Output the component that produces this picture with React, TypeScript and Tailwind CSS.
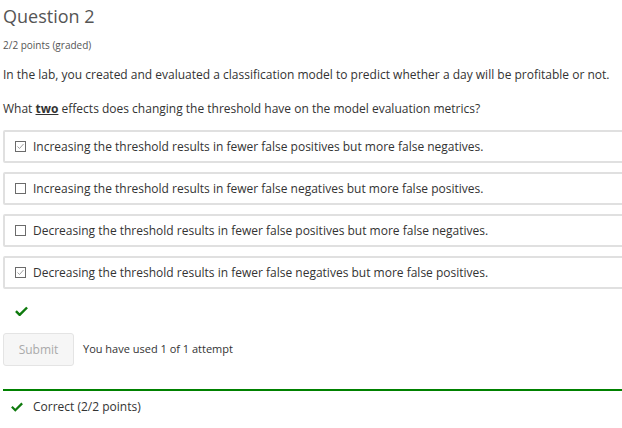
import React from "react";

const options = [
  { text: "Increasing the threshold results in fewer false positives but more false negatives.", checked: true },
  { text: "Increasing the threshold results in fewer false negatives but more false positives.", checked: false },
  { text: "Decreasing the threshold results in fewer false positives but more false negatives.", checked: false },
  { text: "Decreasing the threshold results in fewer false negatives but more false positives.", checked: true },
];

function Box({ checked }: { checked: boolean }) {
  return (
    <svg width="11" height="11" viewBox="0 0 11 11" className="shrink-0">
      <rect x="0.5" y="0.5" width="10" height="10" fill="#fff" stroke="#6b6b6b" />
      {checked && <path d="M2.5 5.5 L4.5 7.5 L8.5 3" fill="none" stroke="#a0a0a0" strokeWidth="1" />}
    </svg>
  );
}

function Check({ size = 13 }: { size?: number }) {
  return (
    <svg width={size} height={size * 0.8} viewBox="0 0 14 11">
      <path d="M1 5.5 L5 9.5 L13 1.5" fill="none" stroke="#0e7a0d" strokeWidth="2.6" />
    </svg>
  );
}

export default function App() {
  return (
    <div className="w-[622px] h-[428px] overflow-hidden bg-white pl-[3px] text-[#333]" style={{ fontFamily: '"Open Sans", sans-serif' }}>
      <h2 className="text-[18px] leading-none text-[#555] pt-[7px]">Question 2</h2>
      <div className="text-[10px] text-[#555] mt-[13px]">2/2 points (graded)</div>
      <p className="text-[12px] mt-[13px]">In the lab, you created and evaluated a classification model to predict whether a day will be profitable or not.</p>
      <p className="text-[12px] mt-[16px]">
        What <u className="font-bold">two</u> effects does changing the threshold have on the model evaluation metrics?
      </p>
      <div className="mt-[12px] flex flex-col gap-[9px] w-[640px]">
        {options.map((o, i) => (
          <div key={i} className="h-[33px] border-2 border-[#e0e0e0] rounded-[2px] flex items-center pl-[10px] gap-[7px] text-[12px]">
            <Box checked={o.checked} />
            <span>{o.text}</span>
          </div>
        ))}
      </div>
      <div className="pl-[12px] mt-[15px] h-[14px] flex items-center">
        <Check />
      </div>
      <div className="mt-[15px] flex items-center gap-[9px]">
        <button className="w-[71px] h-[33px] bg-[#f6f6f6] border border-[#e4e4e4] rounded-[3px] text-[12px] text-[#aaa]">Submit</button>
        <span className="text-[11px] text-[#333]">You have used 1 of 1 attempt</span>
      </div>
      <div className="mt-[23px] border-t-2 border-[#008100]" />
      <div className="flex items-center pl-[8px] gap-[10px] mt-[7px] text-[12px]">
        <Check size={12} />
        <span>Correct (2/2 points)</span>
      </div>
    </div>
  );
}
